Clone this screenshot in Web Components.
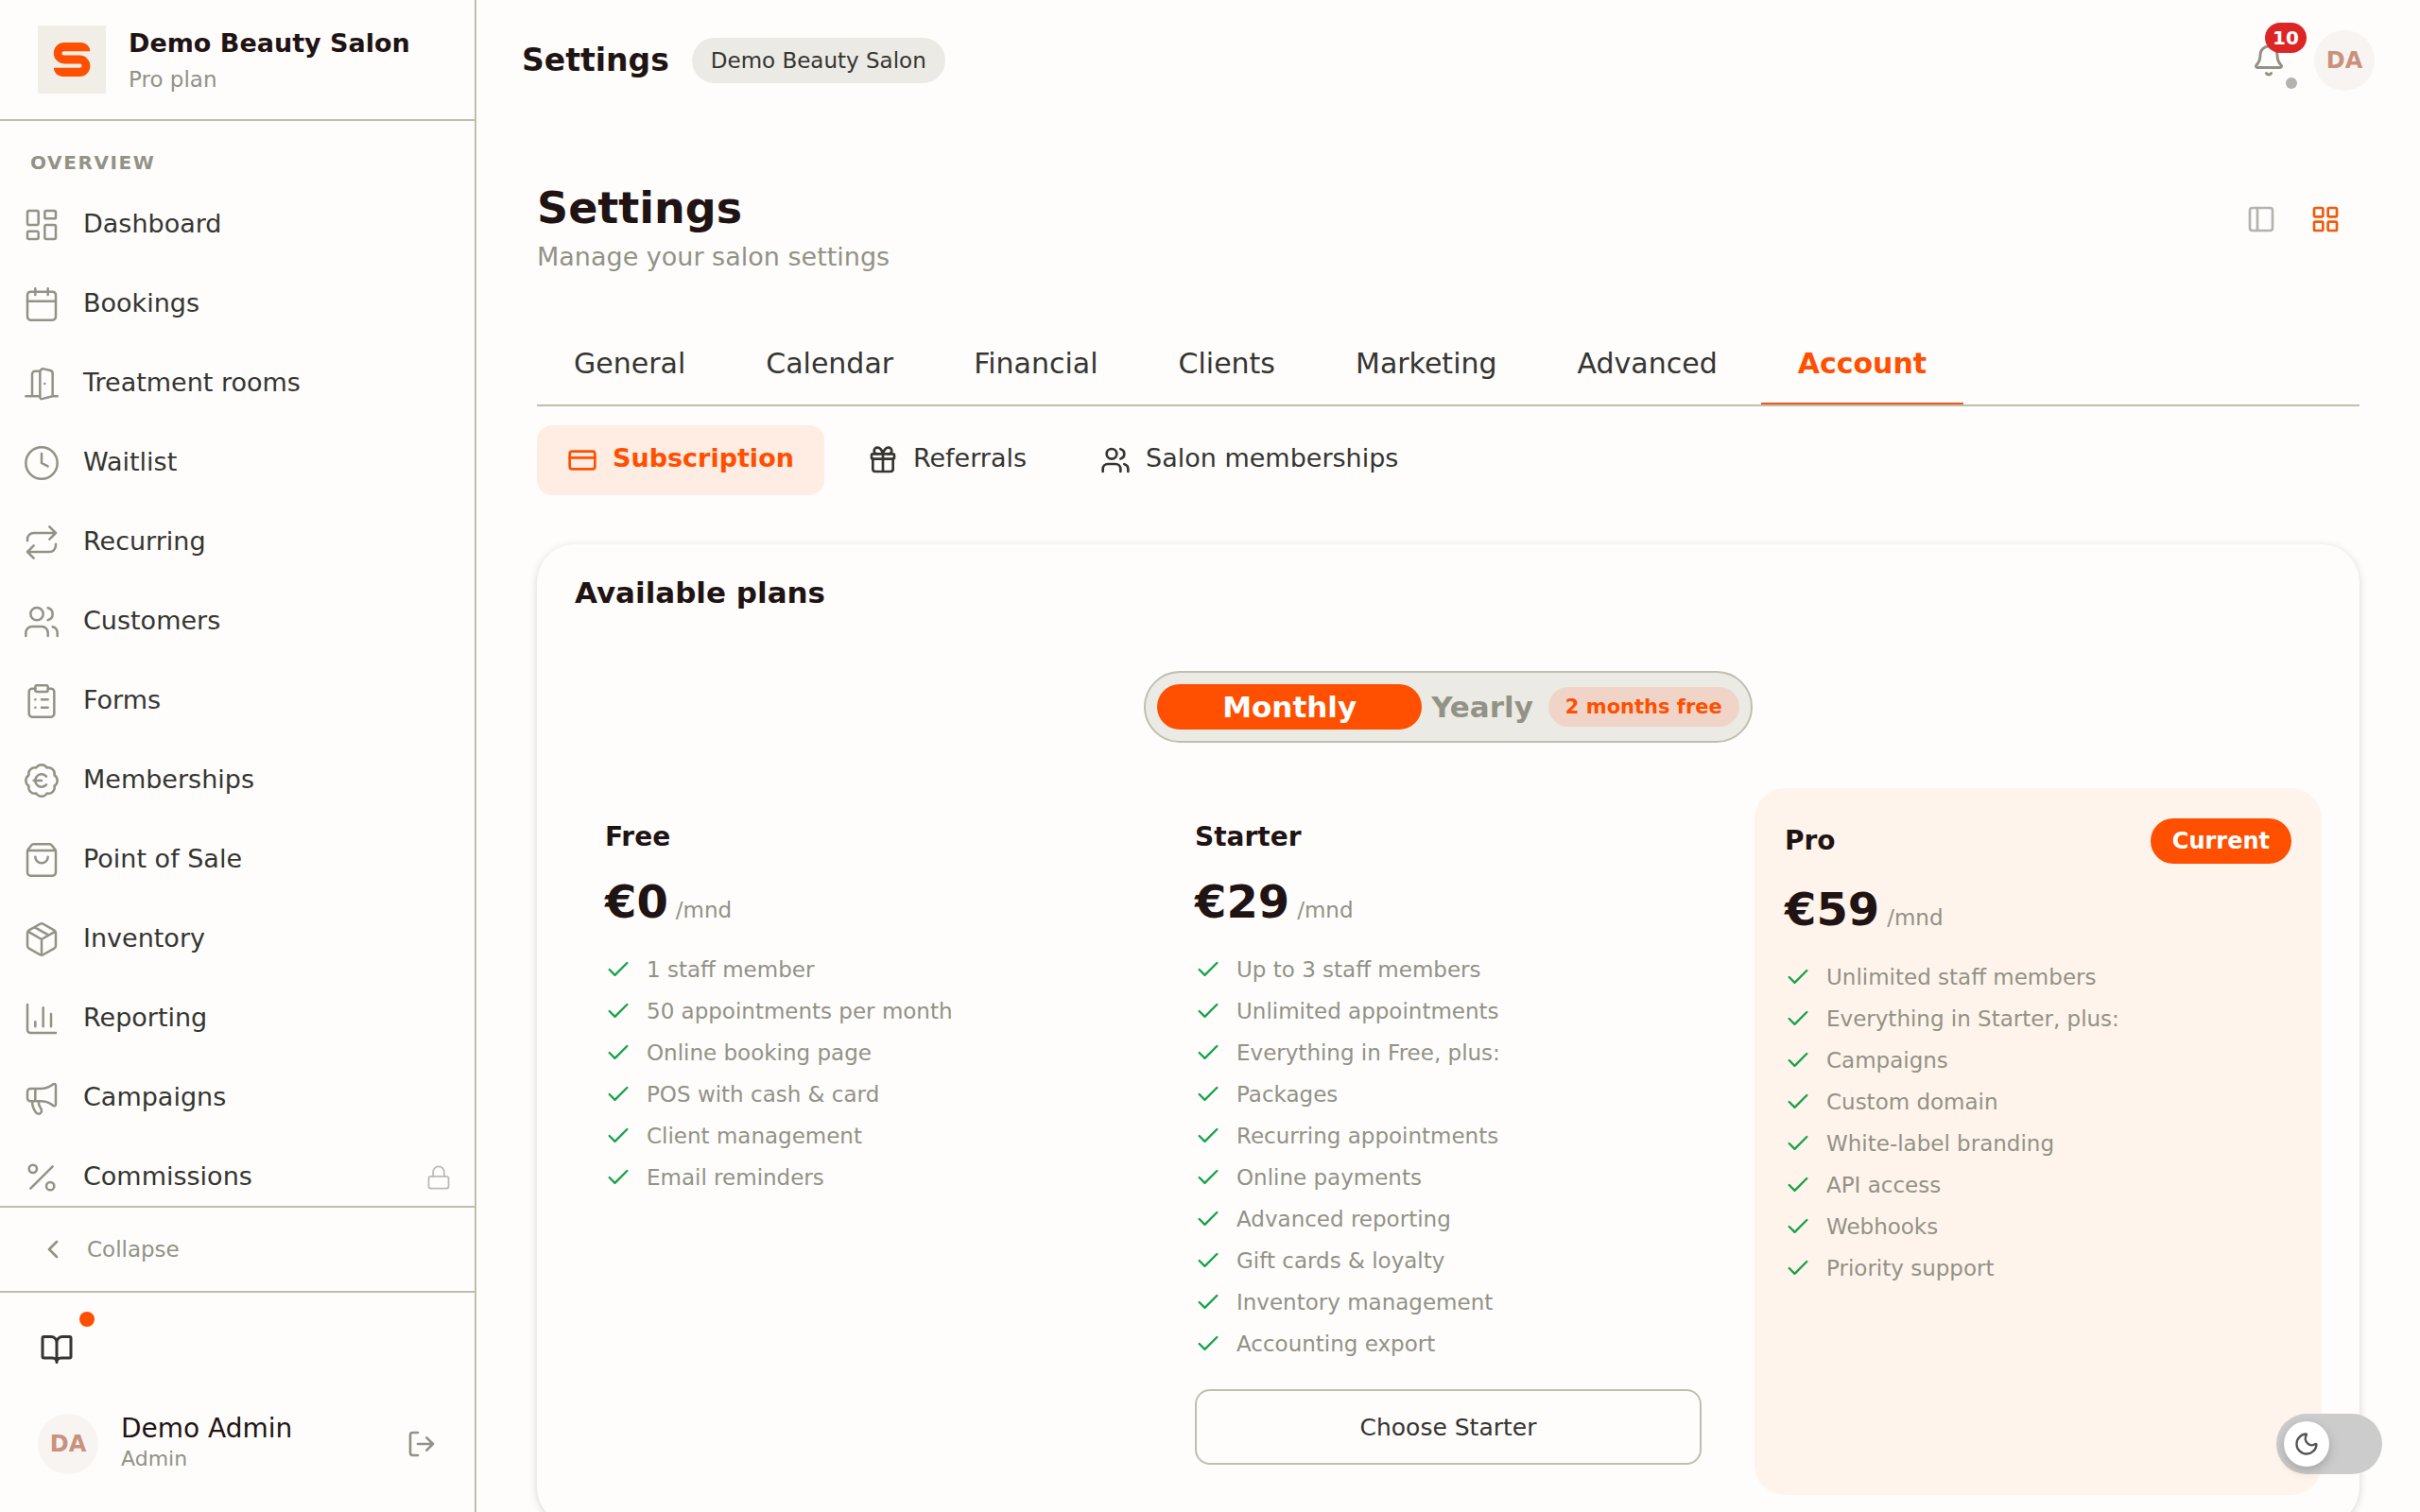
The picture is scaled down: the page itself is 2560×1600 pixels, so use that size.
<!DOCTYPE html>
<html lang="en">
<head>
<meta charset="utf-8">
<meta name="viewport" content="width=device-width, initial-scale=1">
<title>Settings - Demo Beauty Salon</title>
<style>
  :root {
    --bg: #fefdfc;
    --surface-2: #ebeae5;
    --line: #c0bfaf;
    --heading: #1f1413;
    --text: #353531;
    --muted: #929286;
    --primary: #ff4f00;
    --primary-soft: #ffece3;
    --success: #16a34a;
    --danger: #dc2626;
  }

  body {
    margin: 0;
    background: var(--bg);
    color: var(--text);
    font-family: "DejaVu Sans", Verdana, sans-serif;
    font-size: 27px;
  }
</style>
</head>
<body>

<salon-app>
  <salon-sidebar slot="sidebar" name="Demo Beauty Salon" plan="Pro plan" user="Demo Admin" role-name="Admin" initials="DA">
    <nav-link icon="dashboard">Dashboard</nav-link>
    <nav-link icon="calendar">Bookings</nav-link>
    <nav-link icon="door">Treatment rooms</nav-link>
    <nav-link icon="clock">Waitlist</nav-link>
    <nav-link icon="repeat">Recurring</nav-link>
    <nav-link icon="users">Customers</nav-link>
    <nav-link icon="clipboard">Forms</nav-link>
    <nav-link icon="euro">Memberships</nav-link>
    <nav-link icon="bag">Point of Sale</nav-link>
    <nav-link icon="package">Inventory</nav-link>
    <nav-link icon="chart">Reporting</nav-link>
    <nav-link icon="megaphone">Campaigns</nav-link>
    <nav-link icon="percent" locked>Commissions</nav-link>
  </salon-sidebar>

  <salon-topbar slot="topbar" heading="Settings" salon="Demo Beauty Salon" count="10" initials="DA"></salon-topbar>

  <page-header heading="Settings">Manage your salon settings</page-header>

  <tab-bar>
    <tab-item>General</tab-item>
    <tab-item>Calendar</tab-item>
    <tab-item>Financial</tab-item>
    <tab-item>Clients</tab-item>
    <tab-item>Marketing</tab-item>
    <tab-item>Advanced</tab-item>
    <tab-item active>Account</tab-item>
  </tab-bar>

  <sub-tabs>
    <sub-tab icon="card" active>Subscription</sub-tab>
    <sub-tab icon="gift">Referrals</sub-tab>
    <sub-tab icon="users">Salon memberships</sub-tab>
  </sub-tabs>

  <plans-card heading="Available plans">
    <billing-toggle slot="toggle"></billing-toggle>
    <plan-option name="Free" price="€0"
      features="1 staff member|50 appointments per month|Online booking page|POS with cash &amp; card|Client management|Email reminders"></plan-option>
    <plan-option name="Starter" price="€29" action="Choose Starter"
      features="Up to 3 staff members|Unlimited appointments|Everything in Free, plus:|Packages|Recurring appointments|Online payments|Advanced reporting|Gift cards &amp; loyalty|Inventory management|Accounting export"></plan-option>
    <plan-option name="Pro" price="€59" badge="Current"
      features="Unlimited staff members|Everything in Starter, plus:|Campaigns|Custom domain|White-label branding|API access|Webhooks|Priority support"></plan-option>
  </plans-card>
</salon-app>

<theme-switch></theme-switch>

<script>
// Icon shapes on a 24 unit grid
const ICONS = {
  dashboard: '<rect x="3" y="3" width="7" height="9" rx="1"/><rect x="14" y="3" width="7" height="5" rx="1"/><rect x="14" y="12" width="7" height="9" rx="1"/><rect x="3" y="16" width="7" height="5" rx="1"/>',
  calendar: '<path d="M8 2v4M16 2v4M3 10h18"/><rect x="3" y="4" width="18" height="18" rx="2"/>',
  door: '<path d="M11 20H2M11 4.562v16.157a1 1 0 0 0 1.242.97L19 20V5.562a2 2 0 0 0-1.515-1.94l-4-1A2 2 0 0 0 11 4.561zM11 4H8a2 2 0 0 0-2 2v14M14 12h.01M22 20h-3"/>',
  clock: '<circle cx="12" cy="12" r="10"/><path d="M12 6v6l4 2"/>',
  repeat: '<path d="m17 2 4 4-4 4M3 11v-1a4 4 0 0 1 4-4h14M7 22l-4-4 4-4M21 13v1a4 4 0 0 1-4 4H3"/>',
  users: '<path d="M16 21v-2a4 4 0 0 0-4-4H6a4 4 0 0 0-4 4v2M16 3.128a4 4 0 0 1 0 7.744M22 21v-2a4 4 0 0 0-3-3.87"/><circle cx="9" cy="7" r="4"/>',
  clipboard: '<rect x="8" y="2" width="8" height="4" rx="1"/><path d="M16 4h2a2 2 0 0 1 2 2v14a2 2 0 0 1-2 2H6a2 2 0 0 1-2-2V6a2 2 0 0 1 2-2h2M12 11h4M12 16h4M8 11h.01M8 16h.01"/>',
  euro: '<path d="M3.85 8.62a4 4 0 0 1 4.78-4.77 4 4 0 0 1 6.74 0 4 4 0 0 1 4.78 4.78 4 4 0 0 1 0 6.74 4 4 0 0 1-4.77 4.78 4 4 0 0 1-6.75 0 4 4 0 0 1-4.78-4.77 4 4 0 0 1 0-6.76Z"/><path d="M7 12h5M15 9.4a4 4 0 1 0 0 5.2"/>',
  bag: '<path d="M16 10a4 4 0 0 1-8 0M3.103 6.034h17.794M3.4 5.467a2 2 0 0 0-.4 1.2V20a2 2 0 0 0 2 2h14a2 2 0 0 0 2-2V6.667a2 2 0 0 0-.4-1.2l-2-2.667A2 2 0 0 0 17 2H7a2 2 0 0 0-1.6.8z"/>',
  package: '<path d="M11 21.73a2 2 0 0 0 2 0l7-4A2 2 0 0 0 21 16V8a2 2 0 0 0-1-1.73l-7-4a2 2 0 0 0-2 0l-7 4A2 2 0 0 0 3 8v8a2 2 0 0 0 1 1.73zM12 22V12M3.29 7 12 12l8.71-5M7.5 4.27l9 5.15"/>',
  chart: '<path d="M3 3v16a2 2 0 0 0 2 2h16M18 17V9M13 17V5M8 17v-3"/>',
  megaphone: '<path d="M11 6a13 13 0 0 0 8.4-2.8A1 1 0 0 1 21 4v12a1 1 0 0 1-1.6.8A13 13 0 0 0 11 14H5a2 2 0 0 1-2-2V8a2 2 0 0 1 2-2zM6 14a12 12 0 0 0 2.4 7.2 2 2 0 0 0 3.2-2.4A8 8 0 0 1 10 14M8 6v8"/>',
  percent: '<path d="M19 5 5 19"/><circle cx="6.5" cy="6.5" r="2.5"/><circle cx="17.5" cy="17.5" r="2.5"/>',
  lock: '<rect x="3" y="11" width="18" height="11" rx="2"/><path d="M7 11V7a5 5 0 0 1 10 0v4"/>',
  chevron: '<path d="m15 18-6-6 6-6"/>',
  book: '<path d="M12 7v14M3 18a1 1 0 0 1-1-1V4a1 1 0 0 1 1-1h5a4 4 0 0 1 4 4 4 4 0 0 1 4-4h5a1 1 0 0 1 1 1v13a1 1 0 0 1-1 1h-6a3 3 0 0 0-3 3 3 3 0 0 0-3-3z"/>',
  logout: '<path d="m16 17 5-5-5-5M21 12H9M9 21H5a2 2 0 0 1-2-2V5a2 2 0 0 1 2-2h4"/>',
  bell: '<path d="M10.268 21a2 2 0 0 0 3.464 0M3.262 15.326A1 1 0 0 0 4 17h16a1 1 0 0 0 .74-1.673C19.41 13.956 18 12.499 18 8A6 6 0 0 0 6 8c0 4.499-1.411 5.956-2.738 7.326"/>',
  panel: '<rect x="3" y="3" width="18" height="18" rx="2"/><path d="M9 3v18"/>',
  grid: '<rect x="3" y="3" width="7" height="7" rx="1"/><rect x="14" y="3" width="7" height="7" rx="1"/><rect x="14" y="14" width="7" height="7" rx="1"/><rect x="3" y="14" width="7" height="7" rx="1"/>',
  card: '<rect x="2" y="5" width="20" height="14" rx="2"/><path d="M2 10h20"/>',
  gift: '<rect x="3" y="7" width="18" height="4" rx="1"/><path d="M12 7v14M20 11v8a2 2 0 0 1-2 2H6a2 2 0 0 1-2-2v-8M7.5 7a1 1 0 0 1 0-5A4.8 8 0 0 1 12 7a4.8 8 0 0 1 4.5-5 1 1 0 0 1 0 5"/>',
  check: '<path d="M20 6 9 17l-5-5"/>',
  moon: '<path d="M20.985 12.486a9 9 0 1 1-9.473-9.472c.405-.022.617.46.402.803a6 6 0 0 0 8.268 8.268c.344-.215.825-.004.803.401"/>'
};

// Shared base: renders once into an open shadow root
class BaseElement extends HTMLElement {
  constructor() {
    super();
    this.attachShadow({ mode: 'open' });
  }

  connectedCallback() {
    this.shadowRoot.innerHTML = `
      <style>
        *, *::before, *::after { box-sizing: border-box; }
        button {
          margin: 0;
          padding: 0;
          border: 0;
          background: none;
          color: inherit;
          font: inherit;
          cursor: pointer;
        }
        h1, h2, h3, p, ul { margin: 0; padding: 0; }
        a { color: inherit; text-decoration: none; }
      </style>
      ${this.render()}`;
  }

  attr(name) {
    return this.escapeHtml(this.getAttribute(name) || '');
  }

  escapeHtml(text) {
    const div = document.createElement('div');
    div.textContent = text;
    return div.innerHTML;
  }
}

// <ui-icon name="bell" size="36" stroke="2">
class UiIcon extends BaseElement {
  render() {
    const size = this.getAttribute('size') || 32;
    const stroke = this.getAttribute('stroke') || 2;
    return `
      <style>
        :host { display: block; flex: none; }
        svg { display: block; }
      </style>
      <svg width="${size}" height="${size}" viewBox="0 0 24 24" fill="none" stroke="currentColor"
        stroke-width="${stroke}" stroke-linecap="round" stroke-linejoin="round" aria-hidden="true">
        ${ICONS[this.getAttribute('name')] || ''}
      </svg>`;
  }
}

class UserAvatar extends BaseElement {
  render() {
    return `
      <style>
        :host {
          display: flex;
          flex: none;
          align-items: center;
          justify-content: center;
          width: 64px;
          height: 64px;
          border-radius: 50%;
          background: #f8f4f1;
          color: #c9917e;
          font-size: 24px;
          font-weight: 700;
          line-height: 32px;
        }
      </style>
      <span>${this.attr('initials')}</span>`;
  }
}

// Page frame: sidebar on the left, topbar and content on the right
class SalonApp extends BaseElement {
  render() {
    return `
      <style>
        :host {
          display: flex;
          height: 100vh;
          overflow: hidden;
        }
        .column {
          flex: 1;
          min-width: 0;
          display: flex;
          flex-direction: column;
        }
        main {
          flex: 1;
          min-height: 0;
          overflow: hidden;
          padding: 68px 64px 0;
        }
      </style>
      <slot name="sidebar"></slot>
      <div class="column">
        <slot name="topbar"></slot>
        <main><slot></slot></main>
      </div>`;
  }
}

class SalonSidebar extends BaseElement {
  render() {
    return `
      <style>
        :host {
          display: flex;
          flex: none;
          flex-direction: column;
          width: 504px;
          box-sizing: border-box;
          border-right: 2px solid var(--line);
        }
        .brand {
          display: flex;
          align-items: center;
          gap: 24px;
          height: 128px;
          padding: 0 40px;
          border-bottom: 2px solid var(--line);
        }
        .logo {
          flex: none;
          width: 72px;
          height: 72px;
          background: #f0eee7;
        }
        .logo svg { display: block; }
        .name {
          color: var(--heading);
          font-size: 27px;
          font-weight: 700;
          line-height: 40px;
          white-space: nowrap;
        }
        .plan {
          margin-top: 2px;
          color: var(--muted);
          font-size: 23px;
          line-height: 32px;
        }
        nav {
          flex: 1;
          min-height: 0;
          overflow: hidden;
          padding-top: 28px;
        }
        h2 {
          margin-bottom: 8px;
          padding: 0 32px;
          color: var(--muted);
          font-size: 20px;
          font-weight: 700;
          line-height: 32px;
          letter-spacing: 0.08em;
          text-transform: uppercase;
        }
        .collapse {
          display: flex;
          align-items: center;
          gap: 20px;
          height: 90px;
          padding: 0 40px;
          border-top: 2px solid var(--line);
          color: var(--muted);
          font-size: 23px;
        }
        footer {
          padding: 20px 40px 40px 20px;
          border-top: 2px solid var(--line);
        }
        .help {
          position: relative;
          display: grid;
          place-items: center;
          width: 80px;
          height: 80px;
        }
        .dot {
          position: absolute;
          top: 0;
          right: 0;
          width: 16px;
          height: 16px;
          border-radius: 50%;
          background: var(--primary);
        }
        .user {
          display: flex;
          align-items: center;
          gap: 24px;
          margin-top: 28px;
          padding-left: 20px;
        }
        .who {
          flex: 1;
          line-height: 32px;
        }
        .who .full {
          color: var(--heading);
          font-size: 28px;
        }
        .who .role {
          color: var(--muted);
          font-size: 22px;
        }
        .logout { color: var(--muted); }
      </style>
      <div class="brand">
        <div class="logo">
          <svg width="72" height="72" viewBox="0 0 72 72" aria-hidden="true">
            <path fill="#ff4f00" d="M55.3 27.3A9.2 9.2 0 0 0 46 18H28A11.2 11.2 0 0 0 28 40.4H44.4A2.1 2.1 0 0 1 44.4 44.7H16.9A9.3 9.3 0 0 0 26 54H44.2A11.2 11.2 0 0 0 44.2 31.6H27.6A2.1 2.1 0 0 1 27.6 27.3Z"/>
          </svg>
        </div>
        <div>
          <div class="name">${this.attr('name')}</div>
          <div class="plan">${this.attr('plan')}</div>
        </div>
      </div>
      <nav aria-label="Main">
        <h2>Overview</h2>
        <slot></slot>
      </nav>
      <button class="collapse" type="button">
        <ui-icon name="chevron" size="32"></ui-icon>
        <span>Collapse</span>
      </button>
      <footer>
        <button class="help" type="button" aria-label="Help">
          <ui-icon name="book" size="36"></ui-icon>
          <span class="dot"></span>
        </button>
        <div class="user">
          <user-avatar initials="${this.attr('initials')}"></user-avatar>
          <div class="who">
            <div class="full">${this.attr('user')}</div>
            <div class="role">${this.attr('role-name')}</div>
          </div>
          <button class="logout" type="button" aria-label="Log out">
            <ui-icon name="logout" size="32"></ui-icon>
          </button>
        </div>
      </footer>`;
  }
}

class NavLink extends BaseElement {
  render() {
    const locked = this.hasAttribute('locked');
    return `
      <style>
        :host { display: block; }
        a {
          display: flex;
          align-items: center;
          gap: 24px;
          height: 84px;
          padding: 0 24px;
        }
        .icon { color: var(--muted); }
        .label {
          flex: 1;
          padding-bottom: 2px;
          line-height: 40px;
        }
        .lock { color: #bababa; }
      </style>
      <a href="#">
        <ui-icon class="icon" name="${this.attr('icon')}" size="40" stroke="1.5"></ui-icon>
        <span class="label"><slot></slot></span>
        ${locked ? '<ui-icon class="lock" name="lock" size="28" stroke="1.5"></ui-icon>' : ''}
      </a>`;
  }
}

class SalonTopbar extends BaseElement {
  render() {
    return `
      <style>
        :host {
          display: flex;
          flex: none;
          align-items: center;
          justify-content: space-between;
          height: 128px;
          padding: 0 48px;
        }
        .left {
          display: flex;
          align-items: center;
          gap: 24px;
        }
        .title {
          color: var(--heading);
          font-size: 33px;
          font-weight: 700;
          line-height: 40px;
        }
        .salon {
          padding: 0 20px;
          border-radius: 24px;
          background: var(--surface-2);
          font-size: 23px;
          line-height: 48px;
        }
        .right {
          display: flex;
          align-items: center;
          gap: 8px;
        }
        .bell {
          position: relative;
          display: grid;
          place-items: center;
          width: 80px;
          height: 80px;
          color: var(--muted);
        }
        .count {
          position: absolute;
          top: 0;
          right: 0;
          padding: 0 8px;
          min-width: 44px;
          border-radius: 16px;
          background: var(--danger);
          color: #fff;
          font-size: 20px;
          font-weight: 700;
          line-height: 32px;
          text-align: center;
        }
        .status {
          position: absolute;
          right: 10px;
          bottom: 10px;
          width: 12px;
          height: 12px;
          border-radius: 50%;
          background: #b3b3ae;
        }
      </style>
      <div class="left">
        <div class="title">${this.attr('heading')}</div>
        <span class="salon">${this.attr('salon')}</span>
      </div>
      <div class="right">
        <button class="bell" type="button" aria-label="Notifications">
          <ui-icon name="bell" size="36"></ui-icon>
          <span class="count">${this.attr('count')}</span>
          <span class="status"></span>
        </button>
        <user-avatar initials="${this.attr('initials')}"></user-avatar>
      </div>`;
  }
}

class PageHeader extends BaseElement {
  render() {
    return `
      <style>
        :host {
          display: flex;
          align-items: flex-start;
          justify-content: space-between;
          margin-bottom: 48px;
        }
        h1 {
          color: var(--heading);
          font-size: 46px;
          font-weight: 700;
          line-height: 48px;
        }
        p {
          margin-top: 8px;
          color: var(--muted);
          font-size: 27px;
          line-height: 40px;
        }
        .views {
          display: flex;
          gap: 4px;
          padding: 4px;
        }
        button {
          display: grid;
          place-items: center;
          width: 64px;
          height: 64px;
          color: #b3b3ae;
        }
        button[aria-pressed="true"] { color: #f05a0a; }
      </style>
      <div>
        <h1>${this.attr('heading')}</h1>
        <p><slot></slot></p>
      </div>
      <div class="views">
        <button type="button" aria-label="Sidebar view" aria-pressed="false"><ui-icon name="panel" size="32"></ui-icon></button>
        <button type="button" aria-label="Grid view" aria-pressed="true"><ui-icon name="grid" size="32"></ui-icon></button>
      </div>`;
  }
}

class TabBar extends BaseElement {
  render() {
    return `
      <style>
        :host {
          display: flex;
          gap: 7px;
          border-bottom: 2px solid var(--line);
        }
      </style>
      <slot></slot>`;
  }
}

class TabItem extends BaseElement {
  render() {
    return `
      <style>
        :host { display: block; }
        button {
          display: block;
          height: 88px;
          padding: 0 39px;
          font-size: 30px;
        }
        :host([active]) button {
          color: var(--primary);
          font-weight: 700;
          box-shadow: inset 0 -2px #e95a1c;
        }
      </style>
      <button type="button"><slot></slot></button>`;
  }
}

class SubTabs extends BaseElement {
  render() {
    return `
      <style>
        :host {
          display: flex;
          gap: 14px;
          margin: 20px 0 52px;
        }
      </style>
      <slot></slot>`;
  }
}

class SubTab extends BaseElement {
  render() {
    return `
      <style>
        :host { display: block; }
        button {
          display: flex;
          align-items: center;
          gap: 16px;
          height: 74px;
          padding: 0 32px;
          border-radius: 16px;
          font-size: 27px;
        }
        .label {
          padding-bottom: 4px;
          line-height: 40px;
        }
        :host([active]) button {
          background: var(--primary-soft);
          color: var(--primary);
          font-weight: 700;
        }
      </style>
      <button type="button">
        <ui-icon name="${this.attr('icon')}" size="32"></ui-icon>
        <span class="label"><slot></slot></span>
      </button>`;
  }
}

class PlansCard extends BaseElement {
  render() {
    return `
      <style>
        :host {
          display: block;
          padding: 32px 40px;
          border-radius: 40px;
          background: var(--bg);
          box-shadow: 0 2px 8px rgba(0, 0, 0, 0.16);
        }
        h2 {
          color: var(--heading);
          font-size: 31px;
          font-weight: 700;
          line-height: 38px;
        }
        .toggle {
          display: flex;
          justify-content: center;
          margin: 64px 0 48px;
        }
        .plans {
          display: grid;
          grid-template-columns: repeat(3, 1fr);
          gap: 24px;
        }
      </style>
      <h2>${this.attr('heading')}</h2>
      <div class="toggle"><slot name="toggle"></slot></div>
      <div class="plans"><slot></slot></div>`;
  }
}

class BillingToggle extends BaseElement {
  render() {
    return `
      <style>
        :host {
          display: flex;
          gap: 10px;
          padding: 12px;
          border: 2px solid var(--line);
          border-radius: 38px;
          background: var(--surface-2);
        }
        button {
          display: flex;
          align-items: center;
          justify-content: center;
          gap: 16px;
          height: 48px;
          border-radius: 24px;
          color: var(--muted);
          font-size: 31px;
          font-weight: 700;
        }
        .on {
          width: 280px;
          background: var(--primary);
          color: #fff;
        }
        .free {
          padding: 0 18px;
          border-radius: 21px;
          background: #f0d4c7;
          color: var(--primary);
          font-size: 21px;
          line-height: 42px;
        }
      </style>
      <button class="on" type="button" aria-pressed="true">Monthly</button>
      <button type="button" aria-pressed="false">
        <span>Yearly</span>
        <span class="free">2 months free</span>
      </button>`;
  }
}

class PlanOption extends BaseElement {
  render() {
    const features = (this.getAttribute('features') || '').split('|');
    const badge = this.attr('badge');
    const action = this.attr('action');
    return `
      <style>
        :host {
          display: block;
          padding: 32px;
          border-radius: 32px;
        }
        :host([badge]) { background: #fff4ec; }
        .head {
          display: flex;
          align-items: center;
          justify-content: space-between;
        }
        h3 {
          color: var(--heading);
          font-size: 28px;
          font-weight: 700;
          line-height: 40px;
        }
        .badge {
          padding: 0 23px;
          border-radius: 24px;
          background: var(--primary);
          color: #fff;
          font-size: 24px;
          font-weight: 700;
          line-height: 48px;
        }
        .price {
          display: flex;
          align-items: baseline;
          gap: 8px;
          margin: 20px 0 28px;
        }
        .price strong {
          color: var(--heading);
          font-size: 48px;
          line-height: 56px;
        }
        .price span {
          color: var(--muted);
          font-size: 23px;
          line-height: 32px;
        }
        ul {
          display: flex;
          flex-direction: column;
          gap: 12px;
          list-style: none;
        }
        li {
          display: flex;
          align-items: center;
          gap: 16px;
          color: var(--muted);
          font-size: 23px;
          line-height: 32px;
        }
        li ui-icon { color: var(--success); }
        .action {
          width: 100%;
          height: 80px;
          margin-top: 32px;
          border: 2px solid var(--line);
          border-radius: 16px;
          font-size: 25px;
        }
      </style>
      <div class="head">
        <h3>${this.attr('name')}</h3>
        ${badge ? `<span class="badge">${badge}</span>` : ''}
      </div>
      <div class="price"><strong>${this.attr('price')}</strong><span>/mnd</span></div>
      <ul>
        ${features.map((text) => `<li><ui-icon name="check" size="28"></ui-icon><span>${this.escapeHtml(text)}</span></li>`).join('')}
      </ul>
      ${action ? `<button class="action" type="button">${action}</button>` : ''}`;
  }
}

// Floating light/dark switch, stays above the page
class ThemeSwitch extends BaseElement {
  render() {
    return `
      <style>
        :host {
          position: fixed;
          right: 40px;
          bottom: 40px;
        }
        label {
          display: flex;
          align-items: center;
          width: 112px;
          height: 64px;
          padding: 8px;
          border-radius: 32px;
          background: #ccc;
          cursor: pointer;
        }
        input {
          position: absolute;
          inset: 0;
          margin: 0;
          opacity: 0;
        }
        .knob {
          display: grid;
          place-items: center;
          width: 48px;
          height: 48px;
          border-radius: 50%;
          background: #fff;
          box-shadow: 0 4px 12px rgba(0, 0, 0, 0.2);
          color: #555;
        }
        input:checked + .knob { margin-left: auto; }
      </style>
      <label>
        <input type="checkbox" role="switch" aria-label="Dark mode">
        <span class="knob"><ui-icon name="moon" size="28"></ui-icon></span>
      </label>`;
  }
}

customElements.define('ui-icon', UiIcon);
customElements.define('user-avatar', UserAvatar);
customElements.define('salon-app', SalonApp);
customElements.define('salon-sidebar', SalonSidebar);
customElements.define('nav-link', NavLink);
customElements.define('salon-topbar', SalonTopbar);
customElements.define('page-header', PageHeader);
customElements.define('tab-bar', TabBar);
customElements.define('tab-item', TabItem);
customElements.define('sub-tabs', SubTabs);
customElements.define('sub-tab', SubTab);
customElements.define('plans-card', PlansCard);
customElements.define('billing-toggle', BillingToggle);
customElements.define('plan-option', PlanOption);
customElements.define('theme-switch', ThemeSwitch);
</script>
</body>
</html>
